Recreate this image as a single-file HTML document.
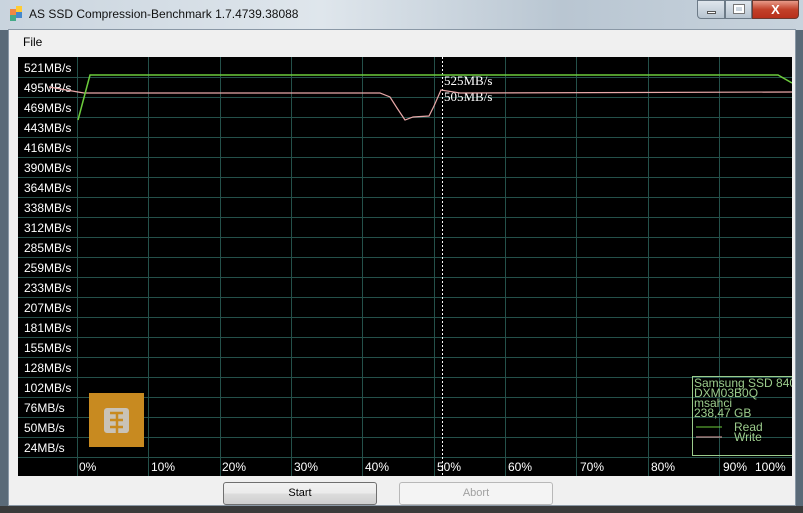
<!DOCTYPE html>
<html><head><meta charset="utf-8"><style>
*{margin:0;padding:0;box-sizing:border-box}
body{width:803px;height:513px;overflow:hidden;background:#5a6a78;font-family:"Liberation Sans",sans-serif;position:relative}
.title{position:absolute;left:0;top:0;width:803px;height:30px;background:linear-gradient(90deg,#c9d4de 0%,#dfe6ec 40%,#b9c6d2 70%,#c8d3dd 100%)}
.title span{position:absolute;left:29px;top:7px;font-size:12px;color:#111}
.client{position:absolute;left:8px;top:29px;width:788px;height:477px;background:#f0f0f0;border:1px solid #8a98a6}
.bottom{position:absolute;left:0;top:506px;width:803px;height:7px;background:#3a3a3a}
.btn{position:absolute;height:23px;border:1px solid #707070;border-radius:3px;background:linear-gradient(#f2f2f2,#ebebeb 50%,#dddddd 51%,#cfcfcf);font-size:11px;text-align:center;line-height:21px;color:#000}
</style></head><body>
<div class="title">
<div style="position:absolute;left:10px;top:9px;width:6px;height:6px;background:#e84"></div>
<div style="position:absolute;left:16px;top:6px;width:6px;height:6px;background:#fc3"></div>
<div style="position:absolute;left:10px;top:15px;width:6px;height:6px;background:#4a8"></div>
<div style="position:absolute;left:16px;top:12px;width:6px;height:6px;background:#48c"></div>
<span>AS SSD Compression-Benchmark 1.7.4739.38088</span>
<div style="position:absolute;left:697px;top:0;width:28px;height:19px;border:1px solid #6d7b88;border-radius:0 0 0 4px;background:linear-gradient(#dfe6ed,#b7c4d0)"><div style="position:absolute;left:9px;top:10px;width:9px;height:3px;background:#fff;border:1px solid #555"></div></div>
<div style="position:absolute;left:725px;top:0;width:27px;height:19px;border:1px solid #6d7b88;background:linear-gradient(#dfe6ed,#b7c4d0)"><div style="position:absolute;left:8px;top:4px;width:10px;height:8px;border:2px solid #fff;outline:1px solid #777"></div></div>
<div style="position:absolute;left:752px;top:0;width:47px;height:19px;border:1px solid #6d3a30;border-radius:0 0 4px 0;background:linear-gradient(#e89a88,#c2412a 50%,#b8301c);color:#fff;font-weight:bold;font-size:13px;text-align:center;line-height:17px">X</div>
</div>
<div class="client">
<div style="position:absolute;left:14px;top:5px;font-size:12px">File</div>
</div>
<svg style="position:absolute;left:18px;top:57px" width="774" height="419" viewBox="18 57 774 419" font-family="Liberation Sans,sans-serif">
<rect x="18" y="57" width="774" height="419" fill="#000"/>
<g stroke="#24504a" stroke-width="1">
<line x1="18" y1="77.5" x2="792" y2="77.5"/><line x1="18" y1="97.5" x2="792" y2="97.5"/><line x1="18" y1="117.5" x2="792" y2="117.5"/><line x1="18" y1="137.5" x2="792" y2="137.5"/><line x1="18" y1="157.5" x2="792" y2="157.5"/><line x1="18" y1="177.5" x2="792" y2="177.5"/><line x1="18" y1="197.5" x2="792" y2="197.5"/><line x1="18" y1="217.5" x2="792" y2="217.5"/><line x1="18" y1="237.5" x2="792" y2="237.5"/><line x1="18" y1="257.5" x2="792" y2="257.5"/><line x1="18" y1="277.5" x2="792" y2="277.5"/><line x1="18" y1="297.5" x2="792" y2="297.5"/><line x1="18" y1="317.5" x2="792" y2="317.5"/><line x1="18" y1="337.5" x2="792" y2="337.5"/><line x1="18" y1="357.5" x2="792" y2="357.5"/><line x1="18" y1="377.5" x2="792" y2="377.5"/><line x1="18" y1="397.5" x2="792" y2="397.5"/><line x1="18" y1="417.5" x2="792" y2="417.5"/><line x1="18" y1="437.5" x2="792" y2="437.5"/><line x1="18" y1="457.5" x2="792" y2="457.5"/>
<line x1="77.5" y1="57" x2="77.5" y2="476"/><line x1="148.5" y1="57" x2="148.5" y2="476"/><line x1="220.5" y1="57" x2="220.5" y2="476"/><line x1="291.5" y1="57" x2="291.5" y2="476"/><line x1="362.5" y1="57" x2="362.5" y2="476"/><line x1="434.5" y1="57" x2="434.5" y2="476"/><line x1="505.5" y1="57" x2="505.5" y2="476"/><line x1="576.5" y1="57" x2="576.5" y2="476"/><line x1="648.5" y1="57" x2="648.5" y2="476"/><line x1="719.5" y1="57" x2="719.5" y2="476"/>
</g>
<line x1="442.5" y1="57" x2="442.5" y2="476" stroke="#fff" stroke-dasharray="2,2"/>
<g fill="#fff" font-size="12">
<text x="24" y="72">521MB/s</text><text x="24" y="92">495MB/s</text><text x="24" y="112">469MB/s</text><text x="24" y="132">443MB/s</text><text x="24" y="152">416MB/s</text><text x="24" y="172">390MB/s</text><text x="24" y="192">364MB/s</text><text x="24" y="212">338MB/s</text><text x="24" y="232">312MB/s</text><text x="24" y="252">285MB/s</text><text x="24" y="272">259MB/s</text><text x="24" y="292">233MB/s</text><text x="24" y="312">207MB/s</text><text x="24" y="332">181MB/s</text><text x="24" y="352">155MB/s</text><text x="24" y="372">128MB/s</text><text x="24" y="392">102MB/s</text><text x="24" y="412">76MB/s</text><text x="24" y="432">50MB/s</text><text x="24" y="452">24MB/s</text>
<text x="79" y="471">0%</text><text x="151" y="471">10%</text><text x="222" y="471">20%</text><text x="294" y="471">30%</text><text x="365" y="471">40%</text><text x="437" y="471">50%</text><text x="508" y="471">60%</text><text x="580" y="471">70%</text><text x="651" y="471">80%</text><text x="723" y="471">90%</text><text x="755" y="471">100%</text>
</g>
<g fill="#fff" font-size="13" font-family="Liberation Serif,serif"><text x="444" y="85">525MB/s</text><text x="444" y="101">505MB/s</text></g>
<polyline fill="none" stroke="#e8a8a8" stroke-width="1.2" points="49,87 78,92 84,93 380,93 390,97 397,108 405,120 413,117 429,116 434,106 441,90 460,93 792,92"/>
<polyline fill="none" stroke="#6ccc3c" stroke-width="1.5" points="78,120 90,75 778,75 792,83"/>
<rect x="89" y="393" width="55" height="54" fill="#c88a20"/>
<rect x="104" y="408" width="25" height="25" rx="3" fill="#c9c2b6"/>
<path d="M110 413h13M110 420h13M110 427h13M117 413v7M117 420v14" stroke="#c88a20" stroke-width="2.5"/>
<rect x="692.5" y="376.5" width="104" height="79" fill="none" stroke="#9ccc8c"/>
<g fill="#9ccc8c" font-size="12"><text x="694" y="387">Samsung SSD 840 P</text><text x="694" y="397">DXM03B0Q</text><text x="694" y="407">msahci</text><text x="694" y="417">238,47 GB</text><text x="734" y="431">Read</text><text x="734" y="441">Write</text></g>
<line x1="696" y1="427" x2="722" y2="427" stroke="#6ccc3c"/><line x1="696" y1="437" x2="722" y2="437" stroke="#e8a8a8"/>
</svg>
<div class="btn" style="left:223px;top:482px;width:154px">Start</div>
<div class="btn" style="left:399px;top:482px;width:154px;border-color:#b8b8b8;background:#f4f4f4;color:#a0a0a0">Abort</div>
<div class="bottom"></div>
</body></html>
